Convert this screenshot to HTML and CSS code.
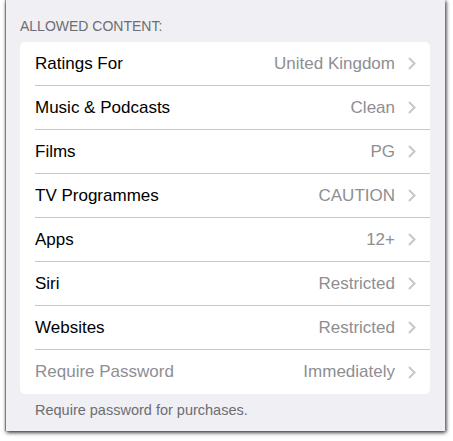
FILE: index.html
```html
<!DOCTYPE html>
<html>
<head>
<meta charset="utf-8">
<link rel="stylesheet" href="styles.css">
</head>
<body>
<div class="panel">
  <div class="header">ALLOWED CONTENT:</div>
  <div class="card">
    <div class="row"><span class="label">Ratings For</span><span class="value">United Kingdom</span><span class="chev"><svg width="8" height="13" viewBox="0 0 8 13"><path d="M1 1 L6.5 6.5 L1 12" fill="none" stroke="#c7c7cc" stroke-width="2"/></svg></span></div>
    <div class="row"><span class="label">Music &amp; Podcasts</span><span class="value">Clean</span><span class="chev"><svg width="8" height="13" viewBox="0 0 8 13"><path d="M1 1 L6.5 6.5 L1 12" fill="none" stroke="#c7c7cc" stroke-width="2"/></svg></span></div>
    <div class="row"><span class="label">Films</span><span class="value">PG</span><span class="chev"><svg width="8" height="13" viewBox="0 0 8 13"><path d="M1 1 L6.5 6.5 L1 12" fill="none" stroke="#c7c7cc" stroke-width="2"/></svg></span></div>
    <div class="row"><span class="label">TV Programmes</span><span class="value">CAUTION</span><span class="chev"><svg width="8" height="13" viewBox="0 0 8 13"><path d="M1 1 L6.5 6.5 L1 12" fill="none" stroke="#c7c7cc" stroke-width="2"/></svg></span></div>
    <div class="row"><span class="label">Apps</span><span class="value">12+</span><span class="chev"><svg width="8" height="13" viewBox="0 0 8 13"><path d="M1 1 L6.5 6.5 L1 12" fill="none" stroke="#c7c7cc" stroke-width="2"/></svg></span></div>
    <div class="row"><span class="label">Siri</span><span class="value">Restricted</span><span class="chev"><svg width="8" height="13" viewBox="0 0 8 13"><path d="M1 1 L6.5 6.5 L1 12" fill="none" stroke="#c7c7cc" stroke-width="2"/></svg></span></div>
    <div class="row"><span class="label">Websites</span><span class="value">Restricted</span><span class="chev"><svg width="8" height="13" viewBox="0 0 8 13"><path d="M1 1 L6.5 6.5 L1 12" fill="none" stroke="#c7c7cc" stroke-width="2"/></svg></span></div>
    <div class="row"><span class="label disabled">Require Password</span><span class="value">Immediately</span><span class="chev"><svg width="8" height="13" viewBox="0 0 8 13"><path d="M1 1 L6.5 6.5 L1 12" fill="none" stroke="#c7c7cc" stroke-width="2"/></svg></span></div>
  </div>
  <div class="footer">Require password for purchases.</div>
</div>
</body>
</html>
```
FILE: styles.css
```css
html, body {
  margin: 0;
  padding: 0;
  background: #ffffff;
}
body {
  font-family: "Liberation Sans", Arial, sans-serif;
  width: 453px;
  height: 441px;
  overflow: hidden;
}
.panel {
  margin-left: 6px;
  width: 439px;
  height: 431px;
  background: #efeff4;
  box-shadow: 0 2px 4px rgba(0,0,0,0.55), -1px 0 1px rgba(0,0,0,0.35), 2px 1px 3px rgba(0,0,0,0.45);
  padding-top: 18px;
  box-sizing: border-box;
}
.header {
  margin-left: 14px;
  font-size: 14px;
  line-height: 17px;
  color: #6d6d72;
  height: 24px;
}
.card {
  margin-left: 14px;
  width: 410px;
  background: #ffffff;
  border-radius: 5px;
}
.row {
  display: flex;
  align-items: center;
  height: 44px;
  margin-left: 15px;
  padding-right: 14px;
  box-sizing: border-box;
  border-bottom: 1px solid #c8c7cc;
  font-size: 17px;
}
.row:last-child {
  border-bottom: none;
}
.label {
  color: #000000;
  flex: 1;
}
.label.disabled {
  color: #8e8e93;
}
.value {
  color: #8e8e93;
  margin-right: 13px;
}
.chev {
  display: flex;
  align-items: center;
  width: 8px;
  height: 13px;
}
.footer {
  margin-left: 29px;
  margin-top: 8px;
  font-size: 14.5px;
  line-height: 17px;
  color: #6d6d72;
}
```
